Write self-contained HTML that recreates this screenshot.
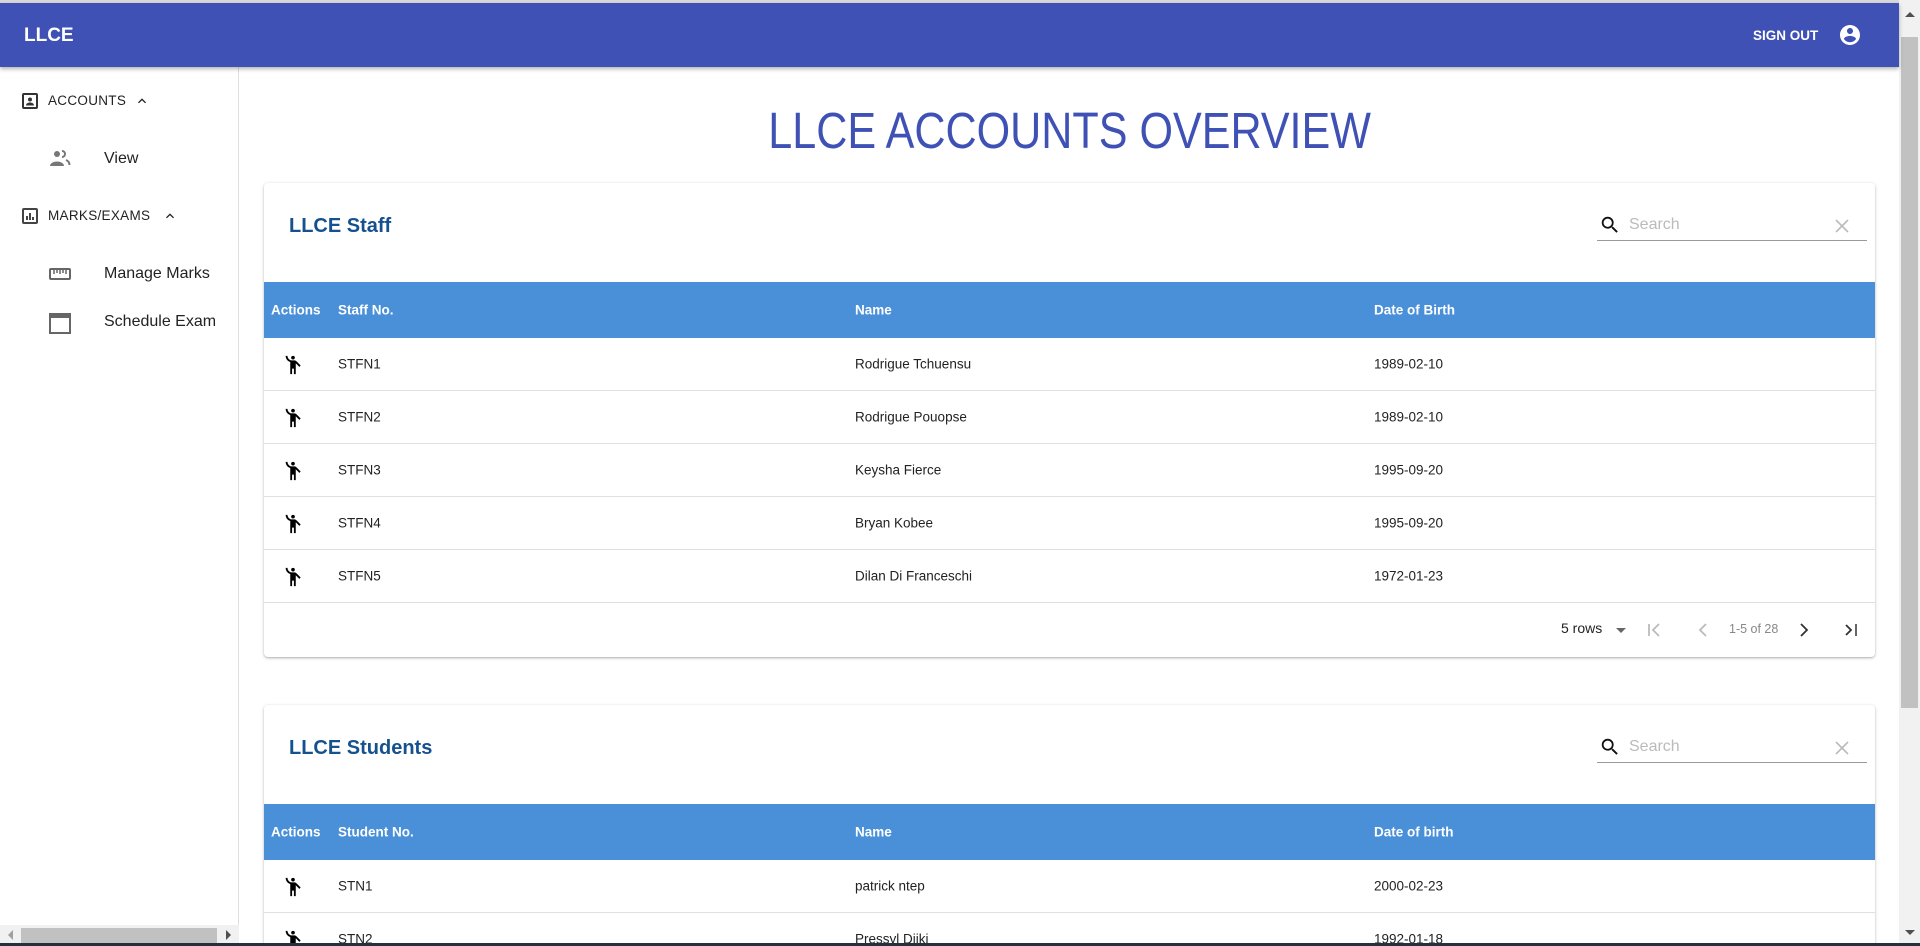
<!DOCTYPE html>
<html style="width:1920px;height:946px;overflow:hidden"><head><meta charset="utf-8"><style>
*{box-sizing:border-box;margin:0;padding:0}
body{width:1920px;height:946px;overflow:hidden;background:#fff;font-family:"Liberation Sans",Arial,sans-serif;position:relative;color:rgba(0,0,0,.87)}
.abs{position:absolute}
.bar{left:0;top:3px;width:1899px;height:64px;background:#3f51b5;box-shadow:0 2px 4px rgba(0,0,0,.3);z-index:2}
.topline{left:0;top:0;width:1899px;height:3px;background:#d8d8d8}
.side{left:0;top:67px;width:239px;height:879px;border-right:1px solid #e0e0e0}
.card{left:264px;width:1611px;background:#fff;box-shadow:0 1px 3px rgba(0,0,0,.25),0 1px 1px rgba(0,0,0,.1);border-radius:4px;overflow:hidden}
.title{font-size:20px;color:#15508f;font-weight:bold;left:25px}
.hdr{left:0;width:1611px;height:56px;background:#4a90d9;color:#fff;font-weight:bold;font-size:13.5px}
.hdr span,.row span{position:absolute;top:50%;transform:translateY(-50%)}
.row{left:0;width:1611px;height:53px;border-bottom:1px solid #e0e0e0;font-size:13.5px;color:#222}
.search{width:270px;height:30px;border-bottom:1px solid #999;left:1333px}
.search .t{position:absolute;left:32px;top:5px;font-size:16px;color:#bbb}
.nav{font-size:14px;color:#222}
</style></head><body>
<div class="abs topline"></div>
<div class="abs bar">
 <div class="abs" style="left:24px;top:22px;color:#fff;font-size:19px;font-weight:bold">LLCE</div>
 <div class="abs" style="left:1753px;top:25px;color:#fff;font-size:13.5px;font-weight:bold">SIGN OUT</div>
 <svg class="abs" style="left:1838px;top:20px" width="24" height="24" viewBox="0 0 24 24"><path fill="#fff" d="M12 2C6.48 2 2 6.48 2 12s4.48 10 10 10 10-4.480 10-10S17.52 2 12 2zm0 3c1.66 0 3 1.34 3 3s-1.34 3-3 3-3-1.34-3-3 1.34-3 3-3zm0 14.2c-2.5 0-4.71-1.28-6-3.22.03-1.99 4-3.08 6-3.080 1.99 0 5.97 1.09 6 3.08-1.29 1.94-3.5 3.22-6 3.22z"/></svg>
</div>
<div class="abs side">
 <svg class="abs" style="left:22px;top:26px" width="16" height="16" viewBox="0 0 16 16"><rect x="1" y="1" width="14" height="14" rx="1" fill="none" stroke="#333" stroke-width="2"/><circle cx="8" cy="6.5" r="2" fill="#333"/><path d="M4 12.5c0-2 2-3 4-3s4 1 4 3z" fill="#333"/></svg>
 <div class="abs nav" style="left:48px;top:26px;font-size:13.5px;letter-spacing:.3px">ACCOUNTS</div>
 <svg class="abs" style="left:134px;top:26px" width="16" height="16" viewBox="0 0 24 24"><path d="M7.4 15.4L12 10.8l4.6 4.6L18 14l-6-6-6 6z" fill="#222"/></svg>
 <svg class="abs" style="left:49px;top:82px" width="22" height="18" viewBox="0 0 22 18"><circle cx="8" cy="5" r="3" fill="#777"/><path d="M1 17c0-3 4-4.5 7-4.5s7 1.5 7 4.5z" fill="#777"/><path d="M13 2a3 3 0 0 1 0 6M17 11c2 .8 3.5 2 3.5 5" fill="none" stroke="#777" stroke-width="2"/></svg>
 <div class="abs nav" style="left:104px;top:83px;font-size:16px">View</div>
 <svg class="abs" style="left:22px;top:141px" width="16" height="16" viewBox="0 0 16 16"><rect x="1" y="1" width="14" height="14" rx="1" fill="none" stroke="#444" stroke-width="2"/><rect x="4" y="8" width="2" height="4" fill="#444"/><rect x="7" y="5" width="2" height="7" fill="#444"/><rect x="10" y="9" width="2" height="3" fill="#444"/></svg>
 <div class="abs nav" style="left:48px;top:141px;font-size:13.5px;letter-spacing:.3px">MARKS/EXAMS</div>
 <svg class="abs" style="left:162px;top:141px" width="16" height="16" viewBox="0 0 24 24"><path d="M7.4 15.4L12 10.8l4.6 4.6L18 14l-6-6-6 6z" fill="#222"/></svg>
 <svg class="abs" style="left:49px;top:200px" width="22" height="14" viewBox="0 0 22 14"><rect x="1" y="2" width="20" height="10" rx="1" fill="none" stroke="#666" stroke-width="2"/><path d="M5 3v4M8 3v3M11 3v4M14 3v3M17 3v4" stroke="#666" stroke-width="1.5"/></svg>
 <div class="abs nav" style="left:104px;top:198px;font-size:16px">Manage Marks</div>
 <svg class="abs" style="left:49px;top:245px" width="22" height="22" viewBox="0 0 22 22"><rect x="1" y="2" width="20" height="19" fill="none" stroke="#666" stroke-width="2"/><rect x="1" y="2" width="20" height="4" fill="#666"/></svg>
 <div class="abs nav" style="left:104px;top:246px;font-size:16px">Schedule Exam</div>
 <div class="abs" style="left:0;top:858px;width:239px;height:19px;background:#f1f1f1"></div>
 <div class="abs" style="left:21px;top:861px;width:196px;height:15px;background:#c1c1c1"></div>
 <div class="abs" style="left:8px;top:863px;width:0;height:0;border-top:5px solid transparent;border-bottom:5px solid transparent;border-right:5px solid #a0a0a0"></div>
 <div class="abs" style="left:226px;top:863px;width:0;height:0;border-top:5px solid transparent;border-bottom:5px solid transparent;border-left:5px solid #505050"></div>
</div>
<div class="abs" style="left:1899px;top:0;width:21px;height:946px;background:#f1f1f1"></div>
<div class="abs" style="left:1901px;top:37px;width:17px;height:671px;background:#c1c1c1"></div>
<div class="abs" style="left:1905px;top:12px;width:0;height:0;border-left:5px solid transparent;border-right:5px solid transparent;border-bottom:5px solid #505050"></div>
<div class="abs" style="left:1905px;top:930px;width:0;height:0;border-left:5px solid transparent;border-right:5px solid transparent;border-top:5px solid #505050"></div>

<div class="abs" style="left:570px;top:98px;width:1000px;text-align:center;color:#3f51b5;font-size:51px;line-height:66px"><span style="display:inline-block;transform:scaleX(.845)">LLCE ACCOUNTS OVERVIEW</span></div>

<!-- Staff card -->
<div class="abs card" style="top:183px;height:474px">
 <div class="abs title" style="top:32px">LLCE Staff</div>
 <div class="abs search" style="top:28px">
  <svg class="abs" style="left:2px;top:3px" width="22" height="22" viewBox="0 0 24 24"><path fill="#111" d="M15.5 14h-.79l-.28-.27A6.47 6.47 0 0 0 16 9.5 6.5 6.5 0 1 0 9.5 16c1.61 0 3.09-.59 4.23-1.57l.27.28v.79l5 4.99L20.490 19l-4.99-5zm-6 0C7.01 14 5 11.99 5 9.5S7.01 5 9.5 5 14 7.01 14 9.5 11.99 14 9.5 14z"/></svg>
  <div class="t">Search</div>
  <svg class="abs" style="left:236px;top:6px" width="18" height="18" viewBox="0 0 18 18"><path d="M3 3l12 12M15 3L3 15" stroke="#bbb" stroke-width="1.6"/></svg>
 </div>
 <div class="abs hdr" style="top:99px"><span style="left:7px">Actions</span><span style="left:74px">Staff No.</span><span style="left:591px">Name</span><span style="left:1110px">Date of Birth</span></div>
 <div class="abs" style="top:155px;left:0">
  <div class="abs row" style="top:0"><svg class="abs" style="left:18px;top:16px" width="22" height="22" viewBox="0 0 24 24"><circle cx="12" cy="4" r="2"/><path d="M15.89 8.11C15.5 7.72 14.83 7 13.53 7h-2.54C8.24 6.99 6 4.75 6 2H4c0 3.16 2.11 5.84 5 6.71V22h2v-6h2v6h2V10.05L18.95 14l1.41-1.41-4.47-4.48z"/></svg><span style="left:74px">STFN1</span><span style="left:591px">Rodrigue Tchuensu</span><span style="left:1110px">1989-02-10</span></div>
  <div class="abs row" style="top:53px"><svg class="abs" style="left:18px;top:16px" width="22" height="22" viewBox="0 0 24 24"><circle cx="12" cy="4" r="2"/><path d="M15.89 8.11C15.5 7.72 14.83 7 13.53 7h-2.54C8.24 6.99 6 4.75 6 2H4c0 3.16 2.11 5.84 5 6.71V22h2v-6h2v6h2V10.05L18.95 14l1.41-1.41-4.47-4.48z"/></svg><span style="left:74px">STFN2</span><span style="left:591px">Rodrigue Pouopse</span><span style="left:1110px">1989-02-10</span></div>
  <div class="abs row" style="top:106px"><svg class="abs" style="left:18px;top:16px" width="22" height="22" viewBox="0 0 24 24"><circle cx="12" cy="4" r="2"/><path d="M15.89 8.11C15.5 7.72 14.83 7 13.53 7h-2.54C8.24 6.99 6 4.75 6 2H4c0 3.16 2.11 5.84 5 6.71V22h2v-6h2v6h2V10.05L18.95 14l1.41-1.41-4.47-4.48z"/></svg><span style="left:74px">STFN3</span><span style="left:591px">Keysha Fierce</span><span style="left:1110px">1995-09-20</span></div>
  <div class="abs row" style="top:159px"><svg class="abs" style="left:18px;top:16px" width="22" height="22" viewBox="0 0 24 24"><circle cx="12" cy="4" r="2"/><path d="M15.89 8.11C15.5 7.72 14.83 7 13.53 7h-2.54C8.24 6.99 6 4.75 6 2H4c0 3.16 2.11 5.84 5 6.71V22h2v-6h2v6h2V10.05L18.95 14l1.41-1.41-4.47-4.48z"/></svg><span style="left:74px">STFN4</span><span style="left:591px">Bryan Kobee</span><span style="left:1110px">1995-09-20</span></div>
  <div class="abs row" style="top:212px"><svg class="abs" style="left:18px;top:16px" width="22" height="22" viewBox="0 0 24 24"><circle cx="12" cy="4" r="2"/><path d="M15.89 8.11C15.5 7.72 14.83 7 13.53 7h-2.54C8.24 6.99 6 4.75 6 2H4c0 3.16 2.11 5.84 5 6.71V22h2v-6h2v6h2V10.05L18.95 14l1.41-1.41-4.47-4.48z"/></svg><span style="left:74px">STFN5</span><span style="left:591px">Dilan Di Franceschi</span><span style="left:1110px">1972-01-23</span></div>
 </div>
 <div class="abs" style="top:437px;left:1297px;font-size:14px;color:#222">5 rows</div>
 <div class="abs" style="top:445px;left:1352px;width:0;height:0;border-left:5px solid transparent;border-right:5px solid transparent;border-top:5px solid #666"></div>
 <svg class="abs" style="left:1382px;top:438px" width="18" height="18" viewBox="0 0 18 18"><path d="M3 3v12M13 3L7 9l6 6" fill="none" stroke="#bbb" stroke-width="1.8"/></svg>
 <svg class="abs" style="left:1430px;top:438px" width="18" height="18" viewBox="0 0 18 18"><path d="M12 3L6 9l6 6" fill="none" stroke="#bbb" stroke-width="1.8"/></svg>
 <div class="abs" style="top:439px;left:1465px;font-size:12.5px;color:#888">1-5 of 28</div>
 <svg class="abs" style="left:1531px;top:438px" width="18" height="18" viewBox="0 0 18 18"><path d="M6 3l6 6-6 6" fill="none" stroke="#333" stroke-width="1.8"/></svg>
 <svg class="abs" style="left:1578px;top:438px" width="18" height="18" viewBox="0 0 18 18"><path d="M4 4l5 5-5 5" fill="none" stroke="#333" stroke-width="1.8"/><path d="M14 3v12" stroke="#555" stroke-width="1.8"/></svg>
</div>

<!-- Students card -->
<div class="abs card" style="top:705px;height:241px;border-radius:4px 4px 0 0">
 <div class="abs title" style="top:32px">LLCE Students</div>
 <div class="abs search" style="top:28px">
  <svg class="abs" style="left:2px;top:3px" width="22" height="22" viewBox="0 0 24 24"><path fill="#111" d="M15.5 14h-.79l-.28-.27A6.47 6.47 0 0 0 16 9.5 6.5 6.5 0 1 0 9.5 16c1.61 0 3.09-.59 4.23-1.57l.27.28v.79l5 4.99L20.49 19l-4.99-5zm-6 0C7.01 14 5 11.99 5 9.5S7.01 5 9.5 5 14 7.01 14 9.5 11.99 14 9.5 14z"/></svg>
  <div class="t">Search</div>
  <svg class="abs" style="left:236px;top:6px" width="18" height="18" viewBox="0 0 18 18"><path d="M3 3l12 12M15 3L3 15" stroke="#bbb" stroke-width="1.6"/></svg>
 </div>
 <div class="abs hdr" style="top:99px"><span style="left:7px">Actions</span><span style="left:74px">Student No.</span><span style="left:591px">Name</span><span style="left:1110px">Date of birth</span></div>
 <div class="abs" style="top:155px;left:0">
  <div class="abs row" style="top:0"><svg class="abs" style="left:18px;top:16px" width="22" height="22" viewBox="0 0 24 24"><circle cx="12" cy="4" r="2"/><path d="M15.89 8.11C15.5 7.72 14.83 7 13.53 7h-2.54C8.24 6.99 6 4.75 6 2H4c0 3.16 2.11 5.84 5 6.71V22h2v-6h2v6h2V10.05L18.95 14l1.41-1.41-4.47-4.48z"/></svg><span style="left:74px">STN1</span><span style="left:591px">patrick ntep</span><span style="left:1110px">2000-02-23</span></div>
  <div class="abs row" style="top:53px"><svg class="abs" style="left:18px;top:16px" width="22" height="22" viewBox="0 0 24 24"><circle cx="12" cy="4" r="2"/><path d="M15.89 8.11C15.5 7.72 14.83 7 13.53 7h-2.54C8.24 6.99 6 4.75 6 2H4c0 3.16 2.11 5.84 5 6.71V22h2v-6h2v6h2V10.05L18.95 14l1.41-1.41-4.47-4.48z"/></svg><span style="left:74px">STN2</span><span style="left:591px">Pressyl Djiki</span><span style="left:1110px">1992-01-18</span></div>
 </div>
</div>
<div class="abs" style="left:0;top:943px;width:1920px;height:3px;background:#26303c;z-index:5"></div>
</body></html>
